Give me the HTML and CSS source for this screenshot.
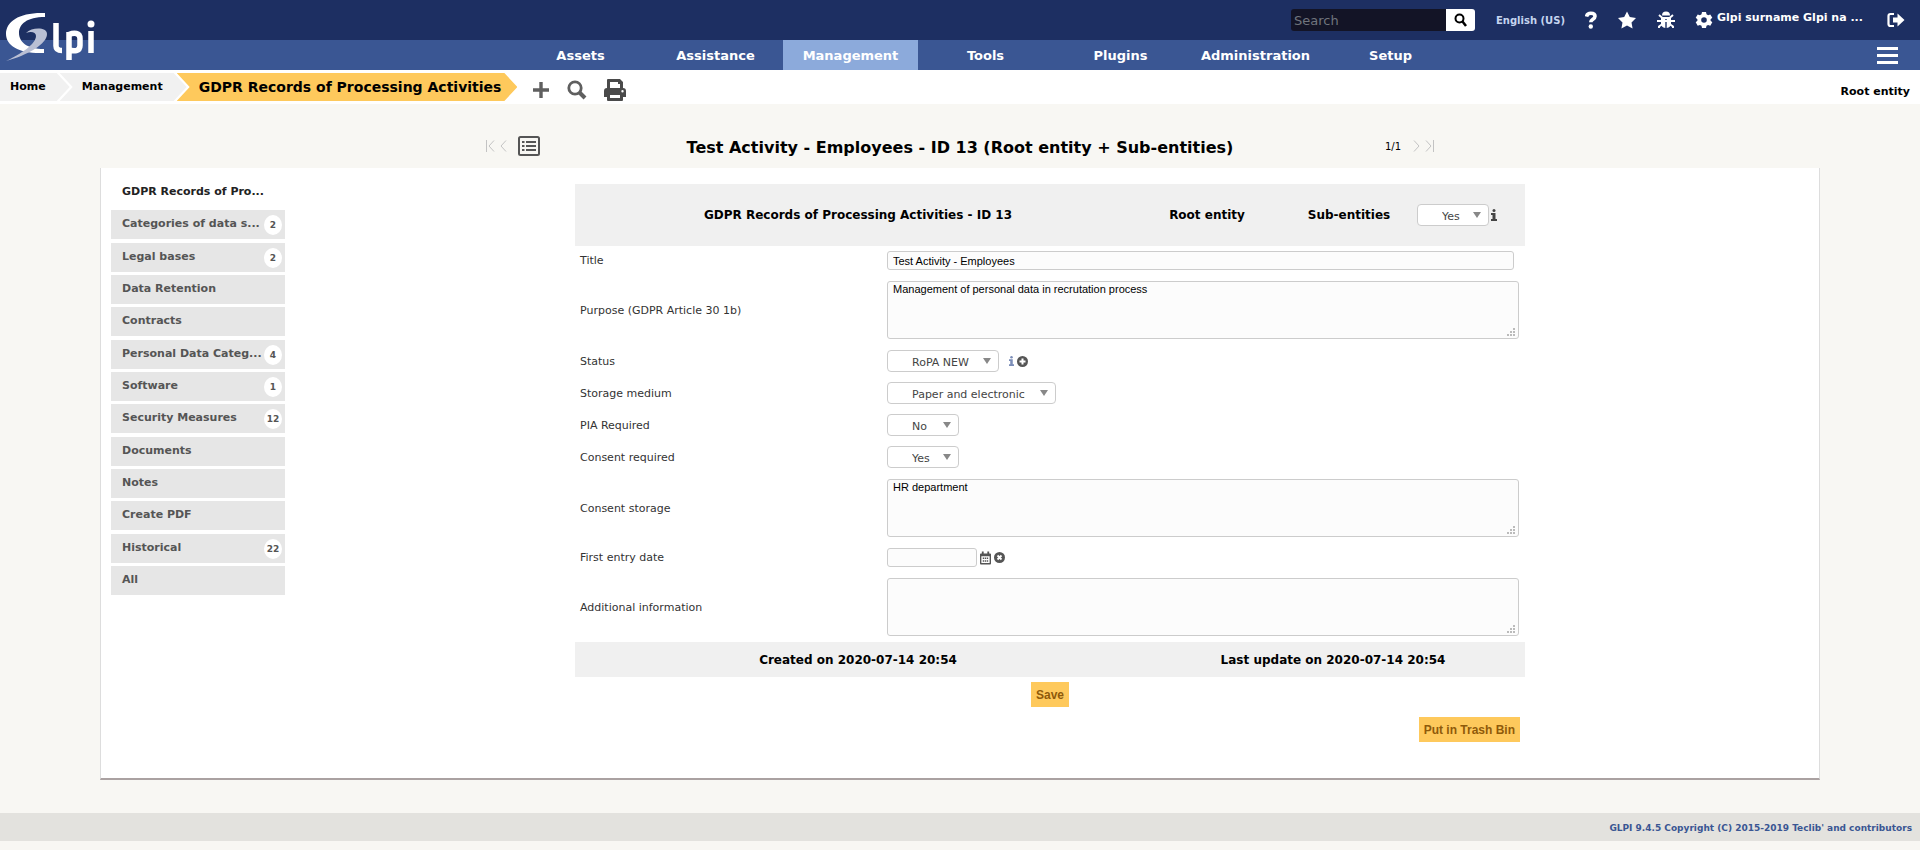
FILE: index.html
```
<!DOCTYPE html>
<html lang="en">
<head>
<meta charset="utf-8">
<title>GLPI - GDPR Records of Processing Activities</title>
<link rel="stylesheet" href="styles.css">
</head>
<body>
<header class="header">
  <div class="topbar">
    <form class="search" role="search">
      <input class="search-input" type="text" placeholder="Search" aria-label="Search">
      <button class="search-btn" type="button" aria-label="Search">
        <svg width="14" height="14" viewBox="0 0 14 14" fill="none" stroke="#000" stroke-width="2"><circle cx="5.500" cy="5.500" r="4"/><path d="M8.500 8.500L12 13" stroke-width="2.500"/></svg>
      </button>
    </form>
    <a class="lang" href="#">English (US)</a>
    <nav class="tools" aria-label="Preferences">
      <a class="tool" href="#" aria-label="Help"><svg width="12" height="18" viewBox="0 0 12 18"><path d="M1.500 5.500C2 3.200 3.600 2.300 5.800 2.300c2.500 0 4.200 1.100 4.200 3 0 3-4.200 2.900-4.200 6" fill="none" stroke="#fff" stroke-width="3.600"/><circle cx="5.800" cy="15.500" r="2.200" fill="#fff"/></svg></a>
      <a class="tool" href="#" aria-label="Bookmarks"><svg width="20" height="18" viewBox="0 0 20 18"><path d="M10 .5l2.800 5.600 6.200.9-4.500 4.400 1.100 6.100L10 14.600l-5.600 2.900 1.100-6.100L1 7l6.200-.9z" fill="#fff"/></svg></a>
      <a class="tool" href="#" aria-label="Debug mode"><svg width="18" height="18" viewBox="0 0 18 18"><g fill="none" stroke="#fff" stroke-width="1.900"><path d="M0 10h18M2 4l3.500 3h7L16 4M2 17v-1.500L5.500 13M16 17v-1.500L12.500 13"/></g><path d="M5 4.500a4 4 0 0 1 8 0z" fill="#fff"/><path d="M4 6h4.300v11C5.500 16.800 4 15 4 12.500zM9.700 6H14v6.500c0 2.500-1.500 4.300-4.300 4.500z" fill="#fff"/></svg></a>
    </nav>
    <a class="user" href="#">
      <svg width="18" height="18" viewBox="0 0 18 18"><path fill="#fff" fill-rule="evenodd" d="M7 1h4l.5 2.300 1.600.9 2.200-.8 2 3.400-1.700 1.500v1.500l1.700 1.500-2 3.400-2.200-.8-1.600.9L11 17H7l-.5-2.200-1.600-.9-2.200.8-2-3.400 1.700-1.500V8.300L.7 6.800l2-3.400 2.200.8 1.600-.9zM9 6.200a2.800 2.800 0 1 0 0 5.600 2.800 2.800 0 0 0 0-5.600z"/></svg>
      <span>Glpi surname Glpi na ...</span>
    </a>
    <a class="tool" href="#" aria-label="Logout"><svg width="18" height="16" viewBox="0 0 18 16"><path d="M7 2H3.500Q1.500 2 1.500 4v8q0 2 2 2H7" fill="none" stroke="#fff" stroke-width="2.200"/><path d="M6 5.500h4.500V1.500L17.500 8l-7 6.500v-4H6z" fill="#fff"/></svg></a>
  </div>
  <div class="menubar">
    <nav class="menu" aria-label="Main menu">
      <a href="#">Assets</a><a href="#">Assistance</a><a class="on" href="#">Management</a><a href="#">Tools</a><a href="#">Plugins</a><a href="#">Administration</a><a href="#">Setup</a>
    </nav>
    <button class="burger" type="button" aria-label="Menu"><span></span><span></span><span></span></button>
  </div>
  <a class="logo" href="#" aria-label="GLPI">
    <svg width="100" height="66" viewBox="0 0 100 66"><path d="M45 13C20 12 6 21 6 34c0 12 14 20 38 19v-4C27 49 19 42 19 33c0-9 8-16 26-16z" fill="#fff"/><path d="M26 33c6-6 21-6 21 1 0 10-19 21-41 27 15-7 30-17 30-25 0-4-5-5-10-3z" fill="#b9bfd4"/><g fill="none" stroke="#fff" stroke-width="5.500"><path d="M56 23v23q0 4.500 6 4.500M69 60V32"/><path d="M69 34.500c5-2 11-2 11 4v7c0 6-6 6-11 4.500"/><path d="M91 31v22"/></g><circle cx="91" cy="24" r="3.500" fill="#fff"/></svg>
  </a>
</header>

<div class="crumbbar">
  <nav class="crumbs" aria-label="Breadcrumb">
    <a class="crumb first" href="#">Home</a>
    <a class="crumb second" href="#">Management</a>
    <a class="crumb current" href="#">GDPR Records of Processing Activities</a>
  </nav>
  <div class="actions">
    <button type="button" aria-label="Add"><svg width="18" height="18" viewBox="0 0 18 18"><path d="M9 1v16M1 9h16" stroke="#5f5f5f" stroke-width="3.400"/></svg></button>
    <button type="button" aria-label="Search"><svg width="20" height="20" viewBox="0 0 20 20" fill="none" stroke="#5f5f5f"><circle cx="8" cy="8" r="6.200" stroke-width="2.800"/><path d="M12.500 12.500L18 18" stroke-width="4"/></svg></button>
    <button type="button" aria-label="Print"><svg width="22" height="22" viewBox="0 0 22 22"><path fill="#4a4a4a" fill-rule="evenodd" d="M3 1q0-1 1-1h12l3 3v6q3 0 3 3v6h-3v3q0 1-1 1H4q-1 0-1-1v-3H0v-6q0-3 3-3zm3 2v6h10V5h-2V3zm0 13v3h10v-3zm12.500-5a1.200 1.200 0 1 0 0 2.400 1.200 1.200 0 0 0 0-2.400z"/></svg></button>
  </div>
  <a class="entity" href="#">Root entity</a>
</div>

<main class="page">
  <div class="titlebar">
    <div class="pager">
      <a href="#" aria-label="First"><svg width="10" height="12" viewBox="0 0 10 12" fill="none" stroke="#c3c3c3"><path d="M1.500 0v12M9 .5L4 6l5 5.500"/></svg></a>
      <a href="#" aria-label="Previous"><svg width="8" height="12" viewBox="0 0 8 12" fill="none" stroke="#c3c3c3"><path d="M7 .5L2 6l5 5.500"/></svg></a>
      <a class="list" href="#" aria-label="List"><svg width="22" height="20" viewBox="0 0 22 20"><rect x="1" y="1" width="20" height="18" rx="1.500" fill="none" stroke="#555" stroke-width="2"/><path d="M8 6h10M8 10h10M8 14h10M4 6h2.500M4 10h2.500M4 14h2.500" stroke="#555" stroke-width="2"/></svg></a>
    </div>
    <h1>Test Activity - Employees - ID 13 (Root entity + Sub-entities)</h1>
    <div class="pager right">
      <span>1/1</span>
      <a href="#" aria-label="Next"><svg width="8" height="12" viewBox="0 0 8 12" fill="none" stroke="#c3c3c3"><path d="M1 .5L6 6l-5 5.500"/></svg></a>
      <a href="#" aria-label="Last"><svg width="10" height="12" viewBox="0 0 10 12" fill="none" stroke="#c3c3c3"><path d="M1 .5L6 6l-5 5.500M8.500 0v12"/></svg></a>
    </div>
  </div>

  <div class="panel">
    <nav class="tabs" aria-label="Tabs">
      <a class="tab active" href="#">GDPR Records of Pro...</a>
      <a class="tab" href="#">Categories of data s...<sup>2</sup></a>
      <a class="tab" href="#">Legal bases<sup>2</sup></a>
      <a class="tab" href="#">Data Retention</a>
      <a class="tab" href="#">Contracts</a>
      <a class="tab" href="#">Personal Data Categ...<sup>4</sup></a>
      <a class="tab" href="#">Software<sup>1</sup></a>
      <a class="tab" href="#">Security Measures<sup>12</sup></a>
      <a class="tab" href="#">Documents</a>
      <a class="tab" href="#">Notes</a>
      <a class="tab" href="#">Create PDF</a>
      <a class="tab" href="#">Historical<sup>22</sup></a>
      <a class="tab" href="#">All</a>
    </nav>

    <form class="form">
      <div class="form-head">
        <strong class="head-name">GDPR Records of Processing Activities - ID 13</strong>
        <strong class="head-entity">Root entity</strong>
        <label class="head-sub" for="sub">Sub-entities</label>
        <span class="head-value"><select id="sub" class="select w-72"><option>Yes</option></select><svg width="6" height="12" viewBox="0 0 6 12"><path d="M0 4h4.500v6H6v2H0v-2h1.500V6H0z" fill="#444"/><circle cx="3" cy="1.500" r="1.500" fill="#444"/></svg></span>
      </div>
      <div class="row short"><label for="title">Title</label><div class="field"><input id="title" class="text wide" type="text" value="Test Activity - Employees"></div></div>
      <div class="row tall"><label for="purpose">Purpose (GDPR Article 30 1b)</label><div class="field"><div class="area"><textarea id="purpose">Management of personal data in recrutation process</textarea><svg class="grip" width="8" height="8" viewBox="0 0 8 8"><path d="M6 0h2v2H6zM3 3h2v2H3zM6 3h2v2H6zM0 6h2v2H0zM3 6h2v2H3zM6 6h2v2H6z" fill="#bbb"/></svg></div></div></div>
      <div class="row"><label for="status">Status</label><div class="field"><select id="status" class="select w-112"><option>RoPA NEW</option></select><svg class="gap" width="5" height="12" viewBox="0 0 6 12"><path d="M0 4h4.500v6H6v2H0v-2h1.500V6H0z" fill="#7b8db8"/><circle cx="3" cy="1.500" r="1.500" fill="#7b8db8"/></svg><button type="button" aria-label="Add status"><svg width="11" height="11" viewBox="0 0 11 11"><circle cx="5.500" cy="5.500" r="5.500" fill="#555"/><path d="M5.500 2.500v6M2.500 5.500h6" stroke="#fff" stroke-width="2"/></svg></button></div></div>
      <div class="row"><label for="medium">Storage medium</label><div class="field"><select id="medium" class="select w-169"><option>Paper and electronic</option></select></div></div>
      <div class="row"><label for="pia">PIA Required</label><div class="field"><select id="pia" class="select w-72"><option>No</option></select></div></div>
      <div class="row"><label for="consent">Consent required</label><div class="field"><select id="consent" class="select w-72"><option>Yes</option></select></div></div>
      <div class="row tall"><label for="storage">Consent storage</label><div class="field"><div class="area"><textarea id="storage">HR department</textarea><svg class="grip" width="8" height="8" viewBox="0 0 8 8"><path d="M6 0h2v2H6zM3 3h2v2H3zM6 3h2v2H6zM0 6h2v2H0zM3 6h2v2H3zM6 6h2v2H6z" fill="#bbb"/></svg></div></div></div>
      <div class="row short"><label for="date">First entry date</label><div class="field"><input id="date" class="text date" type="text"><button type="button" aria-label="Pick date"><svg width="11" height="14" viewBox="0 0 12 14"><path fill="#555" fill-rule="evenodd" d="M2 0h2v2h4V0h2v2h1q1 0 1 1v10q0 1-1 1H1q-1 0-1-1V3q0-1 1-1h1zM1.500 5v7.500h9V5z"/><path d="M3 7.300h6M3 10.300h6" stroke="#555" stroke-width="1.500" stroke-dasharray="1.500 .7"/></svg></button><button type="button" aria-label="Clear date"><svg width="11" height="11" viewBox="0 0 11 11"><circle cx="5.500" cy="5.500" r="5.500" fill="#555"/><path d="M3.500 3.500l4 4M7.500 3.500l-4 4" stroke="#fff" stroke-width="1.800"/></svg></button></div></div>
      <div class="row tall"><label for="extra">Additional information</label><div class="field"><div class="area"><textarea id="extra"></textarea><svg class="grip" width="8" height="8" viewBox="0 0 8 8"><path d="M6 0h2v2H6zM3 3h2v2H3zM6 3h2v2H6zM0 6h2v2H0zM3 6h2v2H3zM6 6h2v2H6z" fill="#bbb"/></svg></div></div></div>
      <div class="dates"><strong>Created on 2020-07-14 20:54</strong><strong>Last update on 2020-07-14 20:54</strong></div>
      <div class="save"><button class="submit" type="button">Save</button></div>
      <div class="trash"><button class="submit" type="button">Put in Trash Bin</button></div>
    </form>
  </div>
</main>

<footer class="footer"><a href="#">GLPI 9.4.5 Copyright (C) 2015-2019 Teclib' and contributors</a></footer>
</body>
</html>
```
FILE: styles.css
```
* { box-sizing: border-box; }
body {
  margin: 0;
  background: #f8f7f3;
  color: #000;
  font-family: Verdana, "DejaVu Sans", sans-serif;
  font-size: 11px;
}
a { color: inherit; text-decoration: none; }
button { border: 0; background: none; padding: 0; cursor: pointer; }
svg { display: block; flex: none; }

.header { position: relative; color: #fff; font-weight: bold; }
.logo { position: absolute; left: 0; top: 0; }
.topbar {
  display: flex;
  align-items: center;
  justify-content: flex-end;
  height: 40px;
  padding: 0 15px 0 0;
  background: #1d2f62;
}
.search { display: flex; width: 184px; height: 22px; margin-right: 21px; }
.search-input {
  flex: 1;
  min-width: 0;
  border: 0;
  padding: 0 3px;
  border-radius: 3px 0 0 3px;
  background: #131426;
  color: #fff;
  font: 13px Verdana, "DejaVu Sans", sans-serif;
}
.search-input::placeholder { color: #70747d; opacity: 1; }
.search-btn {
  display: flex;
  align-items: center;
  justify-content: center;
  width: 29px;
  border-radius: 0 3px 3px 0;
  background: #fff;
}
.lang { margin-right: 20px; color: #c5d5ef; font-size: 10px; }
.tools { display: flex; gap: 20px; margin-right: 20px; }
.user { display: flex; gap: 4px; margin-right: 18px; }
.user span { min-width: 152px; }
.menubar {
  display: flex;
  justify-content: space-between;
  height: 30px;
  padding: 0 22px 0 513px;
  background: #3a5693;
}
.menu { display: flex; font-size: 13px; }
.menu a { width: 135px; line-height: 32px; text-align: center; }
.menu .on { background: #8caadb; }
.burger {
  display: flex;
  flex-direction: column;
  justify-content: center;
  gap: 4px;
  width: 21px;
}
.burger span { height: 3px; background: #fff; }

.crumbbar {
  display: flex;
  align-items: center;
  height: 34px;
  padding-right: 10px;
  background: #fff;
  font-weight: bold;
}
.crumbs { display: flex; }
.crumb { height: 28px; line-height: 28px; background: #f1f1f1; }
.first {
  padding: 0 24px 0 10px;
  clip-path: polygon(0 0, calc(100% - 13px) 0, 100% 50%, calc(100% - 13px) 100%, 0 100%);
}
.second {
  margin-left: -10px;
  padding: 0 24px 0 22px;
  clip-path: polygon(0 0, calc(100% - 13px) 0, 100% 50%, calc(100% - 13px) 100%, 0 100%, 13px 50%);
}
.current {
  margin-left: -10px;
  padding: 0 16px 0 22px;
  background: #fec95c;
  font-size: 14px;
  clip-path: polygon(0 0, calc(100% - 13px) 0, 100% 50%, calc(100% - 13px) 100%, 0 100%, 13px 50%);
}
.actions { display: flex; align-items: center; gap: 17px; padding: 6px 0 0 15px; }
.entity { margin-left: auto; padding-top: 8px; }

.page { width: calc(100% - 200px); margin: 0 auto; }
.titlebar {
  display: flex;
  align-items: center;
  height: 64px;
  padding: 20px 385px 0 385px;
}
.titlebar h1 { flex: 1; margin: 0; padding-top: 2px; font-size: 16px; text-align: center; }
.pager { display: flex; align-items: center; gap: 4px; width: 102px; }
.pager .list { margin-left: 7px; }
.pager.right { justify-content: flex-end; font-size: 10px; }
.pager.right span { margin-right: 8px; }

.panel {
  display: flex;
  align-items: flex-start;
  padding: 10px 10px 36px;
  background: #fff;
  border: 1px solid #ddd;
  border-top: 0;
  border-bottom: 2px solid #aaa1a1;
}
.tabs {
  display: flex;
  flex-direction: column;
  justify-content: space-between;
  width: 174px;
  min-height: 417px;
}
.tab {
  position: relative;
  height: 29px;
  padding-left: 11px;
  line-height: 28px;
  background: #e6e6e6;
  color: #555;
  font-weight: bold;
}
.tab.active { background: #fff; color: #222; }
.tab sup {
  position: absolute;
  right: 3px;
  top: 5px;
  width: 18px;
  height: 20px;
  border-radius: 50%;
  background: #fff;
  font-size: 9px;
  line-height: 20px;
  text-align: center;
}
.form { width: 950px; margin: 6px 0 0 290px; }
.form-head {
  display: grid;
  grid-template-columns: 566px 132px 144px 1fr;
  align-items: center;
  height: 62px;
  background: #f0f0f0;
  font-size: 12px;
  font-weight: bold;
  text-align: center;
}
.head-sub { padding-left: 8px; }
.head-value { display: flex; align-items: center; gap: 2px; }
.row { display: grid; grid-template-columns: 312px 1fr; align-items: center; height: 32px; }
.row.short { height: 29px; }
.row.tall { height: 70px; }
.row label { padding-left: 5px; color: #333; }
.field { display: flex; align-items: center; gap: 3px; }
.text {
  height: 19px;
  padding: 0 5px;
  border: 1px solid #ccc;
  border-radius: 3px;
  background: #fcfcfc;
  font: 11px "Liberation Sans", Arial, sans-serif;
}
.wide { width: 627px; }
.date { width: 90px; }
.area { position: relative; width: 632px; }
textarea {
  display: block;
  width: 100%;
  height: 58px;
  padding: 1px 5px;
  resize: none;
  border: 1px solid #ccc;
  border-radius: 3px;
  background: #fcfcfc;
  font: 11px "Liberation Sans", Arial, sans-serif;
}
.grip { position: absolute; right: 4px; bottom: 3px; }
.select {
  appearance: none;
  height: 22px;
  padding: 2px 0 0 24px;
  border: 1px solid #ccc;
  border-radius: 4px;
  background: #fff url("data:image/svg+xml,%3Csvg xmlns='http://www.w3.org/2000/svg' width='8' height='6'%3E%3Cpath d='M0 0h8L4 6z' fill='%23888'/%3E%3C/svg%3E") no-repeat right 7px center;
  color: #444;
  font: 11px Verdana, "DejaVu Sans", sans-serif;
}
.w-72 { width: 72px; }
.w-112 { width: 112px; }
.w-169 { width: 169px; }
.gap { margin-left: 7px; }
.dates {
  display: grid;
  grid-template-columns: 566px 1fr;
  height: 35px;
  line-height: 36px;
  background: #f0f0f0;
  font-size: 12px;
  text-align: center;
}
.submit {
  height: 25px;
  padding: 0 5px;
  background: #fec95c;
  color: #8f5a0a;
  font: bold 12px "Liberation Sans", Arial, sans-serif;
}
.save { padding-top: 5px; text-align: center; }
.trash { padding: 10px 5px 0; text-align: right; }

.footer {
  height: 28px;
  margin-top: 33px;
  padding-right: 8px;
  background: #e3e2de;
  color: #3a5693;
  font-size: 9px;
  font-weight: bold;
  line-height: 31px;
  text-align: right;
}
```
